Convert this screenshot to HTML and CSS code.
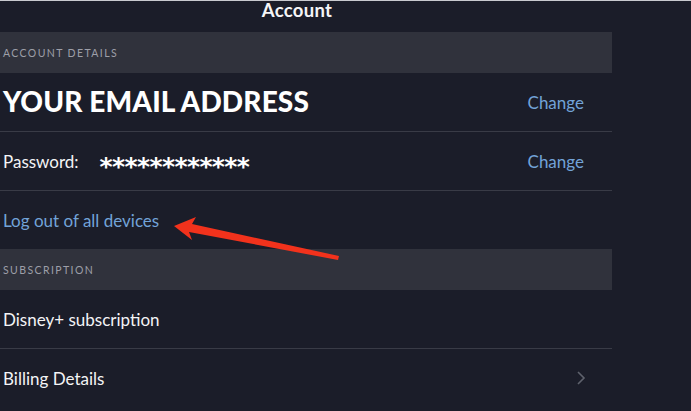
FILE: index.html
```html
<!DOCTYPE html>
<html lang="en">
<head>
	<meta charset="UTF-8">
	<meta name="viewport" content="width=device-width, initial-scale=1.0">
	<title>Account</title>
	<link rel="stylesheet" href="styles.css">
</head>
<body>
	<div class="screen">
		<div class="topbar">
			<h1 class="title">Account</h1>
		</div>

		<div class="settings">
			<div class="section-head">Account details</div>

			<div class="row">
				<span class="email">YOUR EMAIL ADDRESS</span>
				<a class="link change">Change</a>
			</div>

			<div class="row">
				<span class="label">Password:</span>
				<span class="stars">************</span>
				<a class="link change">Change</a>
			</div>

			<div class="row no-line">
				<a class="link">Log out of all devices</a>
			</div>

			<div class="section-head">Subscription</div>

			<div class="row">
				<span class="label">Disney+ subscription</span>
			</div>

			<div class="row no-line">
				<span class="label">Billing Details</span>
				<svg class="chevron" width="10" height="16" viewBox="0 0 10 16">
					<polyline points="2,2 8,8 2,14" fill="none" stroke="#5f626d" stroke-width="1.6"/>
				</svg>
			</div>
		</div>

		<svg class="arrow" width="691" height="411" viewBox="0 0 691 411">
			<polygon points="174,226 196,217 192,224 339,256 338,260 189,232 192,240" fill="#f2321c"/>
		</svg>
	</div>
</body>
</html>
```

FILE: styles.css
```css
body {
	margin: 0;
	background-color: #1b1d29;
	font-family: Lato, "Noto Sans", sans-serif;
	color: #f4f4f6;
}

.screen {
	position: relative;
	width: 691px;
	height: 411px;
	overflow: hidden;
	border-top: 1px solid #c9cacf;
	box-sizing: border-box;
}

.topbar {
	height: 31px;
	display: flex;
	justify-content: center;
	padding-right: 97px;
}

.title {
	margin: 0;
	font-size: 18.5px;
	line-height: 18px;
	font-weight: 700;
	color: #f5f5f7;
	letter-spacing: 0.3px;
}

.settings {
	width: 612px;
}

.section-head {
	height: 41px;
	display: flex;
	align-items: center;
	padding-left: 3px;
	background-color: #30323c;
	color: #9d9fa8;
	font-size: 10.5px;
	letter-spacing: 1.4px;
	text-transform: uppercase;
}

.row {
	height: 58px;
	display: flex;
	align-items: center;
	padding-left: 3px;
	padding-right: 28px;
	border-bottom: 1px solid #393b46;
}

.row.no-line {
	border-bottom: none;
}

.email {
	margin-top: -3px;
	font-size: 28px;
	font-weight: 900;
	letter-spacing: 0.15px;
	color: #ffffff;
}

.label {
	font-size: 17px;
}

.stars {
	margin-left: 21px;
	margin-top: 10px;
	font-family: "DejaVu Sans", sans-serif;
	font-size: 25px;
	font-weight: 700;
	letter-spacing: -0.6px;
	color: #ffffff;
}

.link {
	font-size: 17px;
	color: #72a3d8;
}

.change {
	margin-left: auto;
}

.chevron {
	margin-left: auto;
	margin-right: -2px;
}

.arrow {
	position: absolute;
	left: 0;
	top: -1px;
}
```
